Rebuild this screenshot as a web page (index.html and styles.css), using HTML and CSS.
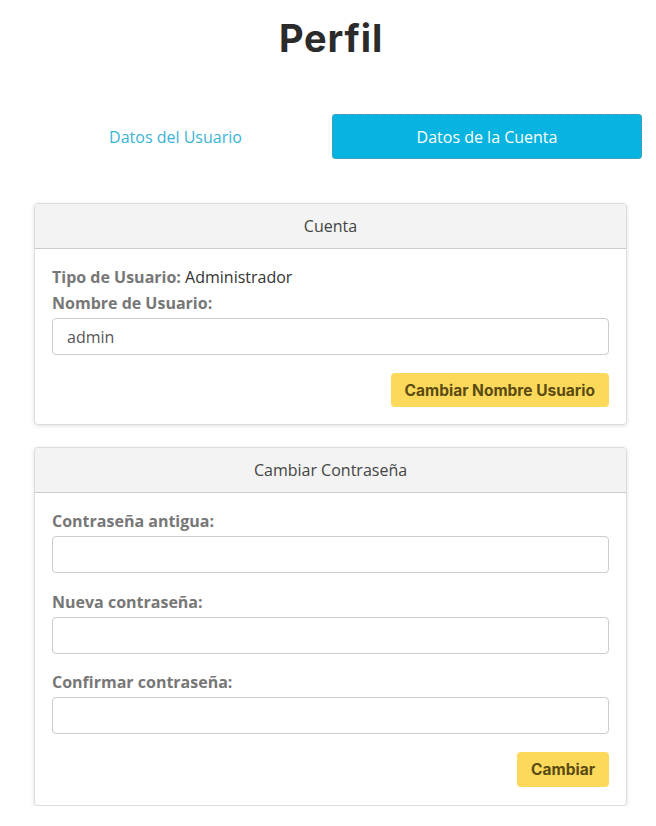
FILE: index.html
```html
<!DOCTYPE html>
<html lang="es">
<head>
<meta charset="utf-8">
<title>Perfil</title>
<link rel="stylesheet" href="styles.css">
</head>
<body>
<div class="page">
  <h1 class="title">Perfil</h1>
  <div class="tabs">
    <div class="tab">Datos del Usuario</div>
    <div class="tab active">Datos de la Cuenta</div>
  </div>

  <section class="card">
    <div class="card-header">Cuenta</div>
    <div class="card-body">
      <p class="info"><span class="label">Tipo de Usuario:</span> Administrador</p>
      <label class="label field-label">Nombre de Usuario:</label>
      <div class="input">admin</div>
      <div class="actions"><button class="btn">Cambiar Nombre Usuario</button></div>
    </div>
  </section>

  <section class="card">
    <div class="card-header">Cambiar Contraseña</div>
    <div class="card-body card-body-tall">
      <div class="group">
        <label class="label field-label">Contraseña antigua:</label>
        <div class="input"></div>
      </div>
      <div class="group">
        <label class="label field-label">Nueva contraseña:</label>
        <div class="input"></div>
      </div>
      <div class="group">
        <label class="label field-label">Confirmar contraseña:</label>
        <div class="input"></div>
      </div>
      <div class="actions"><button class="btn btn-tall">Cambiar</button></div>
    </div>
  </section>
</div>
</body>
</html>
```
FILE: styles.css
```css
* { box-sizing: border-box; }
html, body { margin: 0; padding: 0; background: #fff; }
body {
  font-family: "Open Sans", "Noto Sans", sans-serif;
  font-size: 16px;
  color: #333;
}
.page {
  width: 622px;
  margin-left: 20px;
  padding-top: 14px;
}
.title {
  margin: 0;
  text-align: center;
  font-family: "Inter", "Lato", sans-serif;
  font-weight: 700;
  font-size: 38px;
  line-height: 48px;
  letter-spacing: 0.8px;
  color: #2b2b2b;
}
.tabs {
  display: grid;
  grid-template-columns: 311px 310px;
  column-gap: 1px;
  margin-top: 52px;
  height: 45px;
}
.tab {
  display: flex;
  align-items: center;
  justify-content: center;
  color: #3ab4d6;
  font-size: 16px;
  border-radius: 4px;
}
.tab.active {
  background: #07b3e0;
  color: #fff;
  outline: 1px dotted #6b8f9a;
  outline-offset: -1px;
}
.card {
  margin: 44px 15px 0 14px;
  border: 1px solid #dcdcdc;
  border-radius: 4px;
  box-shadow: 0 1px 4px rgba(0,0,0,0.12);
  background: #fff;
}
.card + .card { margin-top: 22px; }
.card-header {
  height: 45px;
  display: flex;
  align-items: center;
  justify-content: center;
  background: #f3f3f3;
  border-bottom: 1px solid #ccc;
  color: #444;
  font-size: 16px;
  border-radius: 4px 4px 0 0;
}
.card-body {
  padding: 17px;
}
.card-body-tall {
  padding-bottom: 18px;
}
.info {
  margin: 0 0 4px;
  line-height: 22px;
}
.label {
  font-weight: 700;
  color: #777;
}
.field-label {
  display: block;
  line-height: 22px;
  margin-bottom: 4px;
}
.input {
  height: 37px;
  border: 1px solid #ccc;
  border-radius: 4px;
  padding: 0 14px;
  display: flex;
  align-items: center;
  color: #555;
  font-size: 16px;
}
.group + .group { margin-top: 17.5px; }
.actions {
  display: flex;
  justify-content: flex-end;
  margin-top: 18px;
}
.btn {
  height: 34px;
  padding: 0 14px;
  border: none;
  border-radius: 4px;
  background: #fcd95a;
  color: #5a4b12;
  font-family: "Inter", "Lato", sans-serif;
  font-weight: 700;
  font-size: 15.5px;
}
.btn-tall { height: 35px; }
```
